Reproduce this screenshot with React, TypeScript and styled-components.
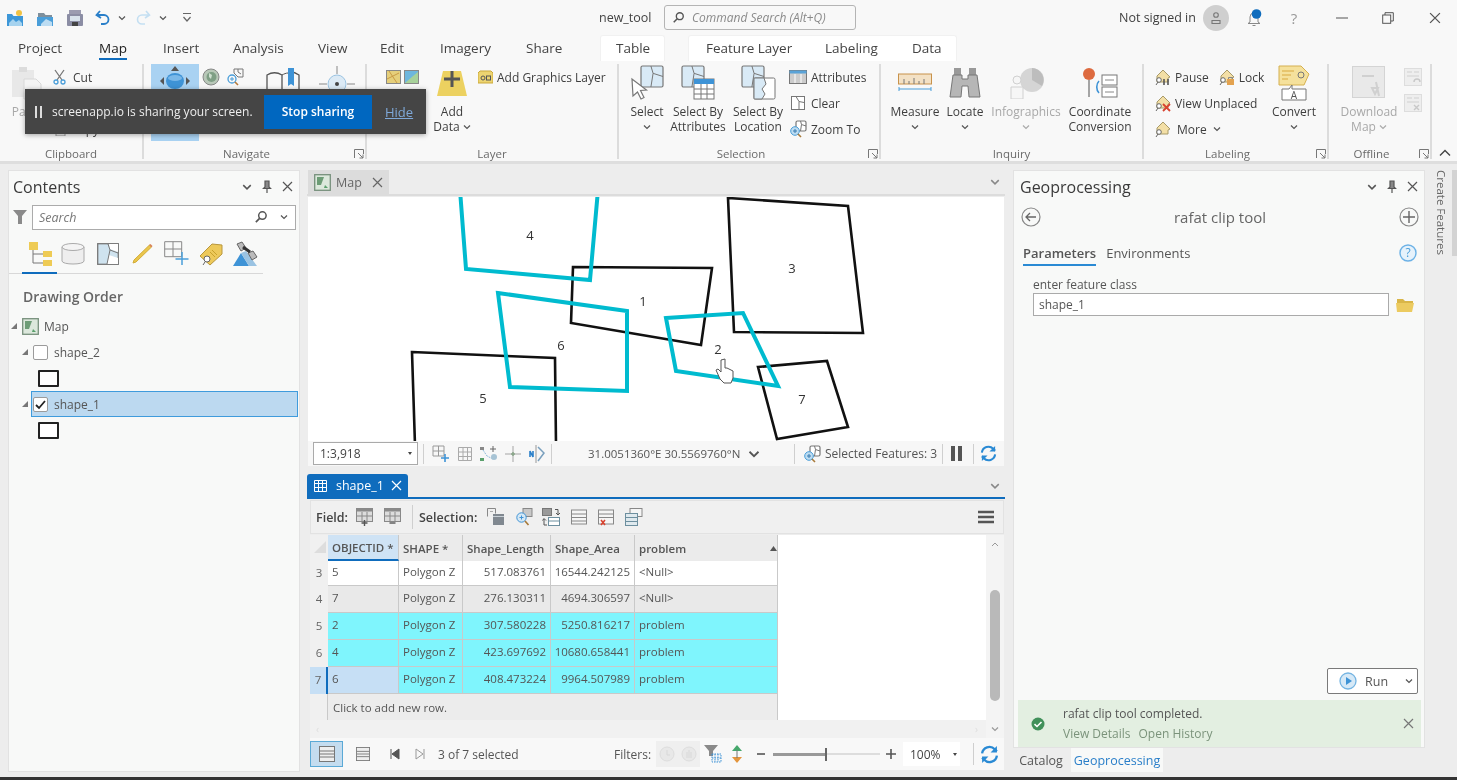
import React from "react";
import styled, { createGlobalStyle } from "styled-components";

const FONT = '"Open Sans", "Noto Sans", "Liberation Sans", sans-serif';

const Global = createGlobalStyle`
  html, body { margin: 0; padding: 0; background: #efefef; }
  body { font-family: ${FONT}; color: #3e3e3e; overflow: hidden; }
  * { box-sizing: border-box; }
`;

const Win = styled.div`
  position: relative; width: 1457px; height: 780px; overflow: hidden;
  display: flex; flex-direction: column; background: #f8f8f8; filter: blur(0.35px);
`;
const TitleBar = styled.div`display: flex; align-items: center; height: 35px; flex: none;`;
const Qat = styled.div`display: flex; align-items: center; width: 599px; flex: none; padding-left: 6px;`;
const Slot = styled.div<{ $w: number; $ml?: number; $left?: boolean }>`
  width: ${p => p.$w}px; margin-left: ${p => p.$ml ?? 0}px; flex: none; display: flex; align-items: center;
  justify-content: ${p => (p.$left ? "flex-start" : "center")}; white-space: nowrap;
`;
const DocName = styled.div`width: 65px; flex: none; font-size: 12.5px; color: #444;`;
const CommandSearch = styled.div`
  width: 192px; height: 25px; flex: none; border: 1.5px solid #b4b4b4; border-radius: 3px; display: flex; align-items: center; gap: 7px;
  padding-left: 7px; font-size: 12px; font-style: italic; color: #8a8a8a;
`;
const AccountArea = styled.div`display: flex; align-items: center; margin-left: auto; width: 338px; flex: none; font-size: 12.5px;`;
const Avatar = styled.div`width: 26px; height: 26px; border-radius: 50%; background: #cfcfcf; display: flex; align-items: center; justify-content: center;`;
const HelpMark = styled.div`width: 30px; flex: none; text-align: center; font-size: 15px; color: #999; line-height: 20px;`;

const TabBar = styled.div`display: flex; align-items: stretch; height: 27px; flex: none; padding-left: 18px; font-size: 13.5px;`;
const Tab = styled.div<{ $w: number; $active?: boolean }>`
  width: ${p => p.$w}px; flex: none; display: flex; align-items: center; position: relative; white-space: nowrap;
  color: ${p => (p.$active ? "#222" : "#444")};
  span { border-bottom: 2px solid ${p => (p.$active ? "#0f6cbd" : "transparent")}; line-height: 20px; margin-left: ${p => (p.$active ? "-1px" : "0")}; }
`;
const ContextPanel = styled.div<{ $w: number; $ml: number; $pl: number }>`
  width: ${p => p.$w}px; margin-left: ${p => p.$ml}px; padding-left: ${p => p.$pl}px; flex: none; background: #fff; border-radius: 3px 3px 0 0;
  display: flex; height: 26px; align-self: flex-start; border: 1px solid #f1f1f1; border-bottom: 0;
`;

const Ribbon = styled.div`display: flex; height: 99px; flex: none; background: #f8f8f8; padding-top: 2px;`;
const RibbonGroup = styled.div<{ $w: number }>`
  width: ${p => p.$w}px; flex: none; display: flex; flex-direction: column; border-right: 2px solid #dcdcdc; height: 95px;
`;
const GroupBody = styled.div<{ $pl: number }>`display: flex; height: 81px; flex: none; padding-left: ${p => p.$pl}px;`;
const GroupFoot = styled.div`display: flex; align-items: center; height: 16px; margin-top: 1px; font-size: 11.5px; color: #6a6a6a;`;
const GroupName = styled.div`flex: 1; text-align: center;`;
const Launcher = styled.div`width: 16px; flex: none; display: flex; justify-content: flex-end; padding-right: 1px;`;
const LargeTool = styled.div<{ $w: number; $ml?: number; $muted?: boolean }>`
  width: ${p => p.$w}px; margin-left: ${p => p.$ml ?? 0}px; flex: none; display: flex; flex-direction: column; align-items: center;
  font-size: 12px; line-height: 15px; color: ${p => (p.$muted ? "#a8a8a8" : "#3e3e3e")}; white-space: nowrap;
`;
const LabelLine = styled.div`display: flex; align-items: center; gap: 3px;`;
const IconBox = styled.div`height: 40px; display: flex; align-items: center; justify-content: center; flex: none; padding-bottom: 2px;`;
const ToolChevron = styled.div`height: 15px; display: flex; align-items: center;`;
const ToolCol = styled.div<{ $w?: number; $ml?: number }>`
  display: flex; flex-direction: column; flex: none; width: ${p => (p.$w ? p.$w + "px" : "auto")}; margin-left: ${p => p.$ml ?? 0}px;
`;
const SmallTool = styled.div<{ $gap?: number }>`
  display: flex; align-items: center; height: 26px; gap: ${p => p.$gap ?? 4}px; font-size: 12px; white-space: nowrap; color: #3e3e3e;
`;
const ActiveTile = styled.div`width: 48px; height: 77px; flex: none; background: #a9d2f2; display: flex; justify-content: center; padding-top: 2px;`;
const Collapse = styled.div`flex: 1; display: flex; align-self: flex-start; justify-content: center; padding-top: 85px;`;

const ShareBanner = styled.div`
  position: absolute; left: 25px; top: 89px; width: 401px; height: 45px; background: #454545; box-shadow: 0 1px 5px rgba(0,0,0,.35);
  display: flex; align-items: center; color: #eee; font-size: 12px;
`;
const PauseMark = styled.div`width: 27px; flex: none; padding-left: 10px; display: flex; gap: 3px; span { width: 2px; height: 12px; background: #ddd; display: block; }`;
const ShareText = styled.div`width: 212px; flex: none; white-space: nowrap;`;
const StopButton = styled.div`width: 108px; height: 34px; flex: none; background: #0067c0; color: #fff; display: flex; align-items: center; justify-content: center; font-weight: 600; font-size: 12px;`;
const HideLink = styled.div`margin-left: 13px; color: #7fa9d9; text-decoration: underline; font-size: 13px;`;

const Main = styled.div`
  flex: 1; display: flex; background: #ededed; border-top: 3px solid #dedede; padding: 6px 0 5px 8px; min-height: 0;
`;
const Panel = styled.div<{ $w: number; $grow?: boolean }>`
  width: ${p => p.$w}px; flex: ${p => (p.$grow ? "1" : "none")}; background: #f8f9f8; border: 1px solid #e2e2e2; display: flex; flex-direction: column; min-height: 0;
`;
const PaneHeader = styled.div<{ $pl?: number }>`display: flex; align-items: center; height: 31px; flex: none; padding: 0 3px 0 ${p => p.$pl ?? 4}px;`;
const PaneTitle = styled.div`flex: 1; font-size: 16px; color: #3a3a3a;`;
const SearchRow = styled.div`display: flex; align-items: center; height: 26px; flex: none; padding: 0 3px 0 2px; margin-top: 2px;`;
const SearchField = styled.div`
  flex: 1; height: 25px; background: #fff; border: 1px solid #ababab; display: flex; align-items: center; font-size: 12.5px; font-style: italic; color: #777; padding-left: 6px; margin-left: 3px;
`;
const ViewIcons = styled.div`display: flex; align-items: center; height: 44px; padding: 4px 0 0 14px; flex: none; width: 254px; border-bottom: 1px solid #d8d8d8;`;
const ViewRule = styled.div`height: 2px; width: 35px; background: #0f6cbd; margin: -2px 0 0 13px; flex: none;`;
const OrderHeading = styled.div`font-size: 14px; font-weight: 600; color: #666; margin: 13px 0 0 14px; height: 26px; flex: none;`;
const TreeRow = styled.div<{ $indent: number }>`
  display: flex; align-items: center; height: 26px; flex: none; font-size: 12px; color: #555; padding-left: ${p => p.$indent}px; gap: 4px;
`;
const TreeText = styled.span<{ $ml: number }>`margin-left: ${p => p.$ml}px;`;
const SelectionBox = styled.div`
  display: flex; align-items: center; gap: 6px; flex: 1; height: 26px; background: #bcd9f0; border: 1px solid #3f9bdc; margin-left: -2px; padding-left: 1px; margin-right: 1px;
`;
const CheckBox = styled.div`width: 15px; height: 15px; background: #fff; border: 1px solid #9b9b9b; border-radius: 2px; display: flex; align-items: center; justify-content: center; flex: none;`;
const Swatch = styled.div<{ $ml: number }>`width: 21px; height: 17px; border: 2px solid #222; background: #fff; margin: 0 0 0 ${p => p.$ml}px; flex: none; border-radius: 1px;`;
const SwatchRow = styled.div`height: 26px; display: flex; align-items: center; flex: none;`;

const Center = styled.div`width: 698px; margin-left: 7px; flex: none; display: flex; flex-direction: column;`;
const DocTabs = styled.div`display: flex; height: 26px; flex: none; align-items: stretch; border-bottom: 2px solid #dcdcdc;`;
const MapTab = styled.div`width: 81px; margin-left: 1px; flex: none; background: #dcdcdc; display: flex; align-items: center; font-size: 12.5px; color: #666; padding-left: 6px; gap: 5px;`;
const RightChevron = styled.div`margin-left: auto; width: 15px; display: flex; align-items: center; justify-content: flex-start;`;
const MapView = styled.div`height: 244px; flex: none; margin: 1px 1px 0 1px; background: #fff; overflow: hidden; display: flex;`;
const MapStatus = styled.div`height: 25px; flex: none; margin: 0 1px; display: flex; align-items: center; font-size: 12px; color: #555; padding-left: 5px; background: #f7f7f7;`;
const ScaleBox = styled.div`width: 105px; height: 23px; background: #fff; border: 1px solid #aaa; display: flex; align-items: center; justify-content: space-between; padding: 0 4px 0 6px; flex: none; color: #444;`;
const VSep = styled.div<{ $ml?: number; $mr?: number; $h?: number }>`width: 1px; height: ${p => p.$h ?? 20}px; background: #cfcfcf; flex: none; margin-left: ${p => p.$ml ?? 0}px; margin-right: ${p => p.$mr ?? 0}px;`;
const CoordText = styled.div`width: 152px; flex: none; font-size: 11.5px; white-space: nowrap;`;
const TableTabs = styled.div`display: flex; height: 25px; margin-top: 8px; flex: none; border-bottom: 2px solid #0f6cbd; align-items: stretch;`;
const TableTab = styled.div`width: 101px; flex: none; background: #0f6cbd; color: #fff; border-radius: 3px 3px 0 0; display: flex; align-items: center; padding-left: 7px; gap: 9px; font-size: 12.5px;`;
const TableBar = styled.div`height: 34px; flex: none; margin: 1px 1px 0 3px; background: #f0f0f0; display: flex; align-items: center; font-size: 12.5px; font-weight: 600; color: #444; padding-left: 5px; border: 1px solid #e2e2e2;`;
const BarLabel = styled.div<{ $w: number }>`width: ${p => p.$w}px; flex: none; white-space: nowrap;`;
const TableArea = styled.div`display: flex; height: 203px; flex: none; margin: 1px 1px 0 3px;`;
const GridSide = styled.div`flex: 1; display: flex; flex-direction: column; min-width: 0;`;
const GridWhite = styled.div`height: 185px; flex: none; background: #fff;`;
const Row = styled.div<{ $h: number }>`display: grid; grid-template-columns: 18px 71px 64px 88px 84px 143px; height: ${p => p.$h}px; width: 468px; font-size: 11.5px; color: #555;`;
const Cell = styled.div<{ $bg?: string; $right?: boolean; $head?: boolean; $mark?: boolean; $weight?: number }>`
  background: ${p => p.$bg ?? "#fff"}; border-right: 1px solid #c9c9c9; border-bottom: ${p => (p.$head ? "0" : "1px solid #c9c9c9")};
  display: flex; align-items: center; justify-content: ${p => (p.$right ? "flex-end" : "flex-start")};
  padding: ${p => (p.$head ? "1px" : "0")} ${p => (p.$right ? "4px" : "0")} ${p => (p.$head ? "0" : "3px")} ${p => (p.$right ? "0" : "4px")};
  white-space: nowrap; font-weight: ${p => p.$weight ?? 400}; overflow: hidden;
  ${p => (p.$mark ? "border-bottom: 2px solid #0f6cbd;" : "")}
`;
const RowHead = styled.div<{ $active?: boolean }>`
  background: ${p => (p.$active ? "#c6dff5" : "#f0f0f0")}; display: flex; align-items: center; justify-content: center; color: #666; padding-bottom: 3px;
  ${p => (p.$active ? "border-right: 2px solid #0f6cbd;" : "")}
`;
const AddRow = styled.div`width: 468px; height: 27px; display: flex; background: #ececec;`;
const AddHead = styled.div`width: 18px; background: #f0f0f0; border-right: 1px solid #c9c9c9; flex: none;`;
const AddText = styled.div`flex: 1; display: flex; align-items: center; padding-left: 5px; font-size: 11.5px; color: #555; border-right: 1px solid #c9c9c9; border-bottom: 1px solid #c9c9c9;`;
const HScroll = styled.div`height: 18px; flex: none; background: #f1f1f1; display: flex; justify-content: space-between; align-items: center; padding: 0 8px 0 6px; color: #ddd; font-size: 10px;`;
const VScroll = styled.div`width: 18px; flex: none; background: #f4f4f4; display: flex; flex-direction: column; align-items: center;`;
const ScrollEnd = styled.div`height: 18px; display: flex; align-items: center; justify-content: center; flex: none;`;
const ScrollThumb = styled.div`width: 10px; height: 111px; background: #b9b9b9; border-radius: 5px; margin-top: 37px; flex: none;`;
const TableStatus = styled.div`height: 32px; flex: none; margin: 0 1px 0 3px; background: #f8f8f8; display: flex; align-items: center; font-size: 12px; color: #555;`;
const LayoutActive = styled.div`width: 33px; height: 26px; flex: none; background: #c4dcef; border: 1px solid #5aa9d6; display: flex; align-items: center; justify-content: center;`;
const FilterChips = styled.div`width: 44px; height: 26px; flex: none; background: #efefef; display: flex; align-items: center; justify-content: space-around;`;
const SliderTrack = styled.div`width: 107px; height: 14px; flex: none; display: flex; align-items: center;`;
const SliderFill = styled.div`height: 3px; background: #999; flex: none;`;
const SliderThumb = styled.div`width: 2px; height: 13px; background: #666; flex: none;`;
const SliderRest = styled.div`height: 2px; background: #ddd; flex: 1;`;
const ZoomBox = styled.div`width: 57px; height: 24px; margin-left: 1px; background: #fff; display: flex; align-items: center; justify-content: space-between; padding: 0 2px 0 7px; flex: none; color: #444;`;

const ToolLabel = styled.div`text-align: center; font-size: 15px; color: #666; flex: 1;`;
const ToolHeader = styled.div`display: flex; align-items: center; height: 27px; padding: 0 5px 0 7px; margin-top: 1px; flex: none;`;
const GpTabs = styled.div`display: flex; align-items: flex-start; height: 30px; padding: 9px 5px 0 9px; margin-top: 5px; font-size: 13px; flex: none; color: #555;`;
const GpTab = styled.div<{ $active?: boolean }>`height: 22px; margin-right: 10px; white-space: nowrap; border-bottom: 2px solid ${p => (p.$active ? "#2a8ad4" : "transparent")}; line-height: 18px; font-weight: ${p => (p.$active ? 600 : 400)};`;
const FieldLabel = styled.div`margin: 13px 0 0 19px; font-size: 12px; color: #555; height: 14px; line-height: 14px; flex: none;`;
const FieldRow = styled.div`display: flex; align-items: center; height: 23px; margin: 1px 0 0 19px; flex: none;`;
const FieldInput = styled.div`width: 356px; height: 23px; background: #fff; border: 1px solid #aaa; font-size: 12px; display: flex; align-items: center; padding-left: 5px; color: #555; flex: none;`;
const Grow = styled.div`flex: 1;`;
const RunRow = styled.div`display: flex; justify-content: flex-end; padding-right: 6px; height: 32px; flex: none;`;
const RunButton = styled.div`width: 91px; height: 26px; background: #fff; border: 1.5px solid #7a7a7a; border-radius: 2px; display: flex; align-items: center; padding: 0 4px 0 11px; font-size: 12.5px; color: #555; flex: none; gap: 8px;`;
const Toast = styled.div`height: 47px; flex: none; background: #e3efe1; margin: 0 3px 0 4px; display: flex; align-items: center; padding: 0 7px 0 13px; gap: 18px;`;
const ToastText = styled.div`flex: 1; font-size: 12px; display: flex; flex-direction: column; gap: 3px; line-height: 17px; color: #555;`;
const ToastLinks = styled.div`display: flex; gap: 8px; color: #7b937b;`;
const RightColumn = styled.div`width: 412px; margin-left: 8px; flex: none; display: flex; flex-direction: column; min-height: 0;`;
const BottomTabs = styled.div`display: flex; height: 24px; flex: none; font-size: 12.5px; align-items: stretch;`;
const BottomTab = styled.div<{ $active?: boolean; $w: number; $ml: number }>`
  width: ${p => p.$w}px; margin-left: ${p => p.$ml}px; display: flex; align-items: center; justify-content: center; flex: none;
  background: ${p => (p.$active ? "#f8f9f8" : "transparent")}; color: ${p => (p.$active ? "#2a7fc9" : "#555")};
`;
const Rail = styled.div`flex: 1; display: flex; justify-content: space-between; margin-left: 5px; height: 86px;`;
const RailLabel = styled.div`writing-mode: vertical-rl; font-size: 11.5px; color: #666; white-space: nowrap; padding-left: 4px;`;
const RailThumb = styled.div`width: 5px; background: #d3d3d3; height: 86px;`;
const DarkEdge = styled.div`height: 3px; background: #333; flex: none;`;

type SvgP = { w: number; h?: number; children?: React.ReactNode; vb?: string };
const Ic = ({ w, h, children, vb }: SvgP) => (
  <svg width={w} height={h ?? w} viewBox={vb ?? `0 0 ${w} ${h ?? w}`} fill="none" style={{ display: "block", flex: "none" }}>{children}</svg>
);

const Chev = ({ c = "#555", s = 8 }: { c?: string; s?: number }) => (
  <Ic w={s} h={s} vb="0 0 8 8"><path d="M1 2.5L4 5.5L7 2.5" stroke={c} strokeWidth="1.2" /></Ic>
);
const Cross = ({ c = "#555", s = 11 }: { c?: string; s?: number }) => (
  <Ic w={s} h={s} vb="0 0 11 11"><path d="M1 1L10 10M10 1L1 10" stroke={c} strokeWidth="1.2" /></Ic>
);
const Pin = () => (
  <Ic w={10} h={13}><path d="M3 1h4v6l1.5 1.5h-7L3 7zM5 8.5V13" stroke="#555" strokeWidth="1.2" fill="#888" /></Ic>
);
const Launch = () => (
  <Ic w={10} h={10}><path d="M.5 9V.5H9.5V5M4 4l5 5M9 5.5V9H5.5" stroke="#777" strokeWidth="1" /></Ic>
);
const Lens = ({ s = 15 }: { s?: number }) => (
  <Ic w={s} h={s} vb="0 0 15 15"><circle cx="9" cy="6" r="4" stroke="#555" strokeWidth="1.6" /><path d="M6 9L2 13" stroke="#555" strokeWidth="1.8" /></Ic>
);
const DownTri = () => <Ic w={6} h={5}><path d="M1 1h4L3 4z" fill="#444" /></Ic>;
const TreeTri = () => <Ic w={8} h={8}><path d="M7 1v6H1z" fill="#777" /></Ic>;

const QatNew = () => (
  <Ic w={18}><path d="M1 5h5l1.5 2H17v10H1z" fill="#3d97d8" /><path d="M3 14l4-4 3 3 3-2 3 3v3H3z" fill="#a6d3ef" /><circle cx="13" cy="4" r="3" fill="#f0c243" /></Ic>
);
const QatOpen = () => (
  <Ic w={18}><path d="M2 4h6l1.5 2H16v3H2z" fill="#7e8f9c" /><path d="M1 8h16v9H1z" fill="#4a9ed9" /><path d="M5 15l5-5 6 3v4H5z" fill="#bcdcf2" /></Ic>
);
const QatSave = () => (
  <Ic w={18}><rect x="3" y="1" width="12" height="5" fill="#9b9bb0" /><rect x="1" y="5" width="16" height="12" rx="1" fill="#8b8da4" /><rect x="4" y="7" width="10" height="5" fill="#d8e2ec" /><rect x="6" y="13" width="6" height="4" fill="#444" /></Ic>
);
const Undo = ({ c }: { c: string }) => (
  <Ic w={16}><path d="M5 1L1.5 5L6 8M2.5 5H9a4.5 4.5 0 010 9H6" stroke={c} strokeWidth="1.8" /></Ic>
);
const Redo = ({ c }: { c: string }) => (
  <Ic w={16}><path d="M11 1l3.5 4L10 8M13.5 5H7a4.5 4.5 0 000 9h3" stroke={c} strokeWidth="1.6" /></Ic>
);
const Customize = () => (
  <Ic w={10} h={11}><path d="M1 1.5h8M1.5 5l3.5 4 3.5-4" stroke="#666" strokeWidth="1.2" /></Ic>
);
const Bell = () => (
  <Ic w={16} h={18}><path d="M4 13V8a4 4 0 018 0v5l2 1.5H2zM6.5 16.5h3" stroke="#888" strokeWidth="1" /><circle cx="10.5" cy="5" r="4.8" fill="#0f6cbd" /></Ic>
);
const Person = () => (
  <Ic w={12} h={14}><circle cx="6" cy="4" r="2.3" stroke="#777" strokeWidth="1.1" /><path d="M2 12.5V9.5h8v3z" stroke="#777" strokeWidth="1.1" /></Ic>
);
const Restore = () => (
  <Ic w={12}><rect x=".7" y="3" width="8" height="8.3" stroke="#555" /><path d="M3 3V.7h8.3V9H9" stroke="#555" /></Ic>
);

const PasteIc = () => (
  <Ic w={32} h={34}><rect x="1" y="4" width="22" height="27" fill="#e8e8e8" /><rect x="8" y="1" width="8" height="5" fill="#dcdcdc" /><path d="M13 13h12l5 5v15H13z" fill="#f4f4f4" stroke="#d8d8d8" /></Ic>
);
const Scissors = () => (
  <Ic w={16}><path d="M3 1l7 10M12 1L5 11" stroke="#777" strokeWidth="1.3" /><circle cx="4" cy="13" r="2" stroke="#4a9ed9" strokeWidth="1.3" /><circle cx="11" cy="13" r="2" stroke="#4a9ed9" strokeWidth="1.3" /></Ic>
);
const CopyIc = () => <Ic w={14}><rect x="1" y="1" width="9" height="10" stroke="#999" /><rect x="4" y="4" width="9" height="10" fill="#eee" stroke="#999" /></Ic>;
const Explore = () => (
  <Ic w={36} h={30}><path d="M18 0l-4 5h8zM18 30l-4-5h8zM3 15l4-4v8zM33 15l-4-4v8z" fill="#555" /><ellipse cx="18" cy="15" rx="9" ry="8" fill="#3e93d6" /><ellipse cx="18" cy="12" rx="7" ry="3" fill="#7ab8e8" /></Ic>
);
const Globe = () => (
  <Ic w={18}><circle cx="9" cy="9" r="8" fill="#b8c8b8" stroke="#888" /><circle cx="9.5" cy="9" r="5" fill="#7f9f85" /><path d="M7 5l3 2-1 4-2-2z" fill="#cfe0d0" /></Ic>
);
const ZoomFull = () => (
  <Ic w={18}><circle cx="6" cy="11" r="4" stroke="#4a9ed9" strokeWidth="1.3" /><path d="M4 11h4M6 9v4" stroke="#4a9ed9" /><path d="M9 14l3 3" stroke="#b87a3a" strokeWidth="1.6" /><path d="M8 1h9v8h-5L8 5z" stroke="#777" /><path d="M12 1v3l3 2" stroke="#777" /></Ic>
);
const Book = () => (
  <Ic w={34} h={30}><path d="M1 30V7c5-3 10-3 15 0v23M33 30V7c-3-2-6-3-8-3" stroke="#555" strokeWidth="1.3" /><path d="M22 0h6v18l-3-2-3 2z" fill="#3e93d6" /><path d="M16 7c2-1 4-2 6-2" stroke="#555" /></Ic>
);
const Crosshair = () => (
  <Ic w={36} h={34}><path d="M18 0v8M0 18h8M28 18h8" stroke="#888" /><circle cx="18" cy="18" r="9" fill="#dceaf5" stroke="#9ac3e2" /><circle cx="18" cy="18" r="2" fill="#444" /></Ic>
);
const MapThumb = ({ v }: { v: number }) => (
  <Ic w={15} h={14}><rect x=".5" y=".5" width="14" height="13" fill={v ? "#6db6dd" : "#e5cf7b"} stroke="#888" /><path d={v ? "M1 13l8-7 5-4v11z" : "M3 1l8 12M1 9l12-6"} fill={v ? "#a7d19a" : "none"} stroke={v ? "none" : "#c99a44"} /></Ic>
);
const AddData = () => (
  <Ic w={32} h={30}><path d="M7 3h18l6 25H1z" fill="#ecd160" /><path d="M16 3v16M8 11h16" stroke="#555" strokeWidth="3" /></Ic>
);
const GraphicsIc = () => (
  <Ic w={15} h={14}><path d="M2 1h11l2 2v10H0V3z" fill="#edd471" stroke="#cba93a" /><circle cx="5" cy="8" r="2" stroke="#555" /><rect x="8.5" y="6" width="4" height="4" stroke="#555" /></Ic>
);
const MapSheet = ({ x, y, w, h, fill = "#fff" }: { x: number; y: number; w: number; h: number; fill?: string }) => (
  <g><rect x={x} y={y} width={w} height={h} rx="1.5" fill={fill} stroke="#777" strokeWidth="1.2" /><path d={`M${x + w * .45} ${y}l${w * .1} ${h * .35}l${w * .45} ${h * .15}M${x + w * .55} ${y + h * .35}l-${w * .1} ${h * .65}`} stroke="#777" strokeWidth="1" /></g>
);
const SelectIc = () => (
  <Ic w={34} h={36}><MapSheet x={11} y={1} w={22} h={21} fill="#d9eaf6" /><path d="M2 14l1 17 4.5-4 3.5 7 3-1.5-3.5-7 6-.5z" fill="#fff" stroke="#777" strokeWidth="1.2" /></Ic>
);
const SelectAttr = () => (
  <Ic w={36} h={36}><MapSheet x={2} y={1} w={22} h={21} fill="#d9eaf6" /><rect x="14" y="14" width="20" height="20" fill="#fff" stroke="#777" /><rect x="14" y="14" width="20" height="5" fill="#3e93d6" /><path d="M14 24h20M14 29h20M21 19v15M27 19v15" stroke="#777" /></Ic>
);
const SelectLoc = () => (
  <Ic w={36} h={36}><MapSheet x={2} y={1} w={22} h={21} fill="#d9eaf6" /><rect x="14" y="13" width="21" height="21" rx="1.5" fill="#fff" stroke="#777" /><path d="M14 13h10l2 6-4 5 3 5-3 5h-8z" fill="#d9eaf6" stroke="#777" /></Ic>
);
const AttrIc = () => (
  <Ic w={18} h={14}><rect x=".5" y=".5" width="17" height="13" fill="#ccc" stroke="#777" /><rect x=".5" y=".5" width="17" height="3" fill="#5aa3d8" /><path d="M6 4v9M12 4v9" stroke="#fff" /></Ic>
);
const ClearIc = () => (
  <Ic w={14}><rect x=".5" y=".5" width="13" height="13" fill="#fff" stroke="#777" /><path d="M5 .5l3 5 5 1M8 5.5V13" stroke="#777" /></Ic>
);
const ZoomToIc = () => (
  <Ic w={18}><MapSheet x={7} y={1} w={10} h={10} /><circle cx="6" cy="11" r="4.3" fill="#bcdcf2" stroke="#4a9ed9" /><path d="M4 11h4M6 9v4" stroke="#3a7db0" /><path d="M9 14l3 3" stroke="#a87a3a" strokeWidth="1.6" /></Ic>
);
const Measure = () => (
  <Ic w={34} h={20}><rect x=".5" y="1" width="33" height="10" fill="#f3e1c5" stroke="#c8924a" /><path d="M6 11V6M11 11V8M16 11V5M21 11V8M26 11V6" stroke="#777" /><path d="M1 16h32" stroke="#4a9ed9" /><path d="M1 14v4M33 14v4" stroke="#4a9ed9" /></Ic>
);
const Binoc = () => (
  <Ic w={32} h={32}><rect x="5" y="1" width="7" height="7" fill="#999" /><rect x="20" y="1" width="7" height="7" fill="#999" /><path d="M4 8h9v4h6V8h9l3 22H20l-1-11h-6l-1 11H1z" fill="#b6b6b6" stroke="#777" /></Ic>
);
const Infographic = () => (
  <Ic w={36} h={32}><circle cx="24" cy="13" r="12" fill="#d5d5d5" /><path d="M24 13V1a12 12 0 0110 18z" fill="#bdbdbd" /><circle cx="9" cy="13" r="4" fill="#f6f6f6" stroke="#d0d0d0" /><path d="M3 32V20h12v12z" fill="#f6f6f6" stroke="#d0d0d0" /></Ic>
);
const Coord = () => (
  <Ic w={36} h={32}><circle cx="7" cy="7" r="6" fill="#dd6a3f" /><path d="M7 13v17" stroke="#888" strokeWidth="1.5" /><rect x="20" y="8" width="15" height="10" fill="#fff" stroke="#777" /><rect x="20" y="20" width="15" height="10" fill="#fff" stroke="#777" /><path d="M23 13h9M23 25h9" stroke="#888" /><path d="M17 14c-3 3-3 9 0 12" stroke="#3e93d6" strokeWidth="1.6" /></Ic>
);
const Tag = ({ mark }: { mark?: "pause" | "lock" | "x" }) => (
  <Ic w={17}><path d="M9 1l7 7-2 1v4H3V7z" fill="#f3dfa6" stroke="#a89a68" /><circle cx="5" cy="11" r="2.3" fill="#fff" stroke="#666" /><path d="M2 16l2-3" stroke="#666" />
    {mark === "pause" && <path d="M10 10v6M14 10v6" stroke="#555" strokeWidth="1.6" />}
    {mark === "lock" && <g><rect x="9" y="10" width="7" height="6" fill="#e3a24f" /><path d="M10.5 10V8.5h4V10" stroke="#888" /></g>}
    {mark === "x" && <path d="M9 9l7 7M16 9l-7 7" stroke="#d8432f" strokeWidth="1.8" />}
  </Ic>
);
const Convert = () => (
  <Ic w={34} h={36}><path d="M2 1h22l8 8-5 11H2z" fill="#f5e19c" stroke="#d5b050" /><path d="M5 6h12M5 10h9M5 14h6" stroke="#d9a93e" /><circle cx="24" cy="10" r="3" stroke="#777" /><path d="M5 24h7l3-4v4h14v11H5z" fill="#fff" stroke="#777" /><text x="17" y="33.5" fontSize="10" fill="#555" textAnchor="middle" fontFamily={FONT}>A</text></Ic>
);
const DownloadMap = () => (
  <Ic w={34} h={34}><rect x=".5" y=".5" width="32" height="31" fill="#e9e9e9" stroke="#d4d4d4" /><path d="M10 10h12M24 16l3 14M20 22h6l-3 6z" stroke="#d0d0d0" strokeWidth="2" /></Ic>
);
const OfflineSm = ({ x }: { x?: boolean }) => (
  <Ic w={18}><rect x=".5" y=".5" width="17" height="17" fill="#eee" stroke="#ddd" /><path d="M3 4h5M10 4h5M3 8h12" stroke="#d0d0d0" /><path d={x ? "M10 11l5 5M15 11l-5 5" : "M10 14a3 3 0 016 0"} stroke="#c8c8c8" strokeWidth="1.4" /></Ic>
);

const FilterIc = () => <Ic w={16}><path d="M1 1h14L10 7v8H6V7z" fill="#8a8a8a" /></Ic>;
const TreeIc = () => (
  <Ic w={24} h={26}><rect x="1" y="1" width="9" height="8" fill="#eecb55" /><rect x="15" y="10" width="9" height="6" fill="#eecb55" /><rect x="15" y="19" width="9" height="6" fill="#eecb55" /><path d="M5 9v13h10M5 13h10" stroke="#777" /></Ic>
);
const DbIc = () => (
  <Ic w={24} h={22}><path d="M1 4v14c0 4 22 4 22 0V4" fill="#eee" stroke="#aaa" /><ellipse cx="12" cy="4" rx="11" ry="3.5" fill="#f4f4f4" stroke="#aaa" /></Ic>
);
const SheetIc = () => (
  <Ic w={22} h={22}><rect x=".7" y=".7" width="20.6" height="20.6" fill="#cfe3ef" stroke="#777" strokeWidth="1.3" /><path d="M12 1l1 5 8 3V1z M10 21l2-9 9 3v6z" fill="#fff" /><path d="M11 1l2 6 8 3M13 7l-3 14" stroke="#777" /></Ic>
);
const Pencil = () => (
  <Ic w={23} h={23}><path d="M18.5 3l2 2L5 20l-3 1 1-3z" fill="#eac64c" stroke="#d3ad39" /><path d="M18 3l1.5-1 2 2-1 1.5z" fill="#d7845a" /></Ic>
);
const GridPlus = () => (
  <Ic w={25} h={26}><path d="M.7.7h17v15H.7zM9 .7v15M.7 8h17" stroke="#888" /><path d="M18 11v13M11.5 18h13" stroke="#4a9ed9" strokeWidth="1.5" /></Ic>
);
const BigTag = () => (
  <Ic w={24}><path d="M1 14L13 2l10 1v9L11 23z" fill="#edc95a" stroke="#b8973e" /><circle cx="8" cy="17" r="3" fill="#fff" stroke="#666" /><path d="M4 23l2-3" stroke="#666" /><path d="M13 8l5 5M11 10l5 5" stroke="#c9a22c" /></Ic>
);
const Satellite = () => (
  <Ic w={26} h={26}><path d="M1 25l8-13 8 13z" fill="#3e93d6" /><path d="M9 12l8 13h8L14 10z" fill="#9ac3e2" /><path d="M5 3l5-2 4 6-5 3zM16 12l5-2 4 6-5 3z" fill="#bbb" stroke="#666" /><path d="M11 6l7 5" stroke="#333" strokeWidth="3" /></Ic>
);
const MiniMap = () => (
  <Ic w={17}><rect x=".7" y=".7" width="15.6" height="15.6" fill="#dce8dc" stroke="#77907c" strokeWidth="1.3" /><path d="M3 3h7l-3 8H3z" fill="#6d9c76" /><path d="M11 11l3 3h-4z" fill="#5aa06c" /></Ic>
);
const Tick = () => <Ic w={11}><path d="M1 6l3 3 6-7" stroke="#222" strokeWidth="1.8" /></Ic>;

const GridAdd = () => <Ic w={18}><path d="M1 1h11v10H1zM6.5 1v10M1 6h11" stroke="#999" /><path d="M13 9v8M9 13h8" stroke="#3e93d6" strokeWidth="1.6" /></Ic>;
const GridPlain = () => <Ic w={14}><path d="M.5.5h13v13H.5zM5 .5v13M9.5.5v13M.5 5h13M.5 9.5h13" stroke="#aaa" /></Ic>;
const SnapIc = () => <Ic w={20} h={18}><path d="M4 5l4 6 6 3" stroke="#8dbadb" strokeDasharray="2 1" /><rect x="1" y="2" width="4" height="3" fill="#888" /><rect x="1" y="13" width="4" height="3" fill="#5aa06c" /><path d="M14 1v6M11 4h6" stroke="#666" /><circle cx="15" cy="12" r="3" fill="#a7c3d4" /></Ic>;
const CrossSm = () => <Ic w={18}><path d="M9 1v16M1 9h16" stroke="#a5a5a5" /><path d="M7 9h4M9 7v4" stroke="#8aa68a" strokeWidth="1.5" /></Ic>;
const NArrow = () => <Ic w={18}><path d="M2 12V6l3 6V6" stroke="#2a7fc9" strokeWidth="1.6" /><path d="M8 0v18" stroke="#999" /><path d="M10 2l6 6-6 8" stroke="#7aa0be" strokeWidth="1.5" /></Ic>;
const Refresh = ({ s = 17 }: { s?: number }) => (
  <Ic w={s} h={s} vb="0 0 18 18"><path d="M2 8a7 7 0 0112-4l2 2M16 10a7 7 0 01-12 4l-2-2" stroke="#2a8ad4" strokeWidth="2.2" /><path d="M16 1v6h-6M2 17v-6h6" fill="#2a8ad4" /></Ic>
);
const PauseBars = () => <Ic w={11} h={15}><path d="M0 0h4v15H0zM7 0h4v15H7z" fill="#555" /></Ic>;
const TableMini = ({ c = "#fff" }: { c?: string }) => <Ic w={13} h={12}><path d="M.5.5h12v11H.5z" stroke={c} /><path d="M.5 3.5h12M4.5.5v11M8.5.5v11M.5 7.5h12" stroke={c} /></Ic>;
const FieldAdd = ({ minus }: { minus?: boolean }) => (
  <Ic w={17} h={18}><rect x=".5" y=".5" width="16" height="13" fill="#dcdcdc" stroke="#888" /><rect x=".5" y=".5" width="16" height="3" fill="#8a8a8a" /><path d="M6 4v9M11 4v9M1 8h15" stroke="#888" /><path d={minus ? "M5.5 15h6" : "M5.5 15h6M8.5 12v6"} stroke="#555" strokeWidth="1.4" /></Ic>
);
const SelA = () => <Ic w={18}><path d="M.5 8.5V.5h8v5" stroke="#888" /><path d="M3 3.5h3" stroke="#aaa" /><rect x="6" y="6" width="11" height="11" fill="#808890" /><path d="M6 8.5h11" stroke="#c8d0d6" /></Ic>;
const SelB = () => <Ic w={18}><rect x="8" y=".5" width="9" height="8" fill="#c8c8c8" stroke="#888" /><circle cx="6.5" cy="9.5" r="4.7" fill="#d5e8f5" stroke="#3e93d6" /><path d="M4.5 9.5h4M6.5 7.5v4" stroke="#3e93d6" /><path d="M10 13l3.5 4" stroke="#a87a3a" strokeWidth="1.6" /></Ic>;
const SelC = () => <Ic w={18}><rect x=".5" y=".5" width="9" height="7" fill="#9a9a9a" stroke="#777" /><rect x="6.5" y="9.5" width="11" height="8" fill="#fff" stroke="#6d8f9f" /><path d="M7 13h10" stroke="#6d8f9f" /><path d="M13 1.5h3v5M14 5l2 2 2-2M5 17H2v-6M.5 12.5l1.500-2 2 2" stroke="#555" /></Ic>;
const SelD = () => <Ic w={16}><rect x=".5" y="1" width="15" height="14" fill="#f5f5f5" stroke="#888" /><path d="M1 5h14M1 8.5h14M1 12h14" stroke="#888" /></Ic>;
const SelE = () => <Ic w={17}><rect x=".5" y="1" width="15" height="14" fill="#f5f5f5" stroke="#888" /><path d="M1 5h14M1 8.5h14" stroke="#888" /><path d="M3 11l4 5M7 11l-4 5" stroke="#d8432f" strokeWidth="1.6" /></Ic>;
const SelF = () => <Ic w={18}><rect x="5" y=".5" width="12" height="8" fill="#f5f5f5" stroke="#888" /><rect x=".5" y="5.500" width="12" height="12" fill="#dfe9ee" stroke="#6d8f9f" /><path d="M1 9.500h11M1 13.500h11" stroke="#6d8f9f" /></Ic>;
const Hamburger = () => <Ic w={16} h={14}><path d="M0 2h16M0 7h16M0 12h16" stroke="#555" strokeWidth="2.4" /></Ic>;

const ListLines = ({ s = 16 }: { s?: number }) => <Ic w={s} h={s} vb="0 0 16 16"><rect x=".5" y=".5" width="15" height="15" fill="#eee" stroke="#777" /><path d="M1 5h14M1 8h14M1 11h14" stroke="#777" /></Ic>;
const Skip = ({ flip, c }: { flip?: boolean; c: string }) => (
  <Ic w={11} h={12}><path d={flip ? "M2 1l7 5-7 5zM10 1v10" : "M9 1L2 6l7 5zM1 1v10"} stroke={c} fill={flip ? "none" : c} /></Ic>
);
const Chip = ({ t }: { t: string }) => <Ic w={16}><circle cx="8" cy="8" r="7" fill="#e8e8e8" stroke="#ddd" /><path d={t} stroke="#d8d8d8" /></Ic>;
const FilterTable = () => <Ic w={20}><path d="M1 1h14l-5 6v5H6V7z" fill="#8a8a8a" /><path d="M9 10h9v8H9zM12 10v8M15 10v8M9 14h9" stroke="#3e93d6" strokeDasharray="1.5 1" /></Ic>;
const UpDown = () => <Ic w={14} h={20}><path d="M7 19l-5-6h10z" fill="#e3953c" /><path d="M2 7l5-6 5 6z" fill="#46a86c" /><path d="M7 6v8" stroke="#777" /></Ic>;

const ArrowBack = () => (
  <Ic w={20}><circle cx="10" cy="10" r="9" stroke="#888" strokeWidth="1.2" /><path d="M15 10H5M9 6l-4 4 4 4" stroke="#666" strokeWidth="1.3" /></Ic>
);
const PlusCircle = () => (
  <Ic w={20}><circle cx="10" cy="10" r="9" stroke="#888" strokeWidth="1.2" /><path d="M10 4v12M4 10h12" stroke="#666" strokeWidth="1.4" /></Ic>
);
const HelpCircle = () => (
  <Ic w={18}><circle cx="9" cy="9" r="8" stroke="#6cb2e6" strokeWidth="1.4" fill="#e6f2fb" /><text x="9" y="13" fontSize="12" fill="#4a9ed9" textAnchor="middle" fontFamily={FONT}>?</text></Ic>
);
const Folder = () => (
  <Ic w={18} h={14}><path d="M1 3V1h6l2 2h8v3H1z" fill="#d9b648" /><path d="M0 5h18l-2 9H1z" fill="#eccb60" /></Ic>
);
const PlayRound = () => (
  <Ic w={18}><circle cx="9" cy="9" r="8" fill="#d6e9f7" stroke="#74b4e2" strokeWidth="1.3" /><path d="M7 5l6 4-6 4z" fill="#3e93d6" /></Ic>
);
const OkBadge = () => (
  <Ic w={14}><circle cx="7" cy="7" r="6.5" fill="#41915a" /><path d="M3.5 7.2l2.5 2.3L10.5 5" stroke="#fff" strokeWidth="1.6" /></Ic>
);

const Polygons = () => {
  const black = [
    "573,267 712,268 701,345 571,323",
    "728,198 848,206 863,333 734,332",
    "412,352 555,358 556,445 415,445",
    "758,367 827,361 848,427 777,439",
  ];
  const cyan = [
    "460,190 466,269 590,280 598,190",
    "498,293 627,311 627,391 510,387",
    "666,318 743,313 778,386 676,371",
  ];
  const labels: [string, number, number][] = [["4", 530, 240], ["1", 643, 306], ["3", 792, 273], ["6", 561, 350], ["2", 718, 354], ["5", 483, 403], ["7", 802, 404]];
  return (
    <svg width="696" height="244" viewBox="308 197 696 244" style={{ display: "block" }}>
      {black.map(p => <polygon key={p} points={p} fill="none" stroke="#111" strokeWidth="2.6" />)}
      {cyan.map(p => <polygon key={p} points={p} fill="none" stroke="#00bbcf" strokeWidth="4" />)}
      {labels.map(([t, x, y]) => <text key={t} x={x} y={y} fontSize="13" fill="#333" textAnchor="middle" fontFamily={FONT}>{t}</text>)}
      <path d="M721 360v12l-3-3-2 1 4 9 4 4h7l2-5v-7l-2-1-2-1-2-1-2 0v-9z" fill="#fff" stroke="#555" strokeWidth="1" />
    </svg>
  );
};

type RowData = [string, string, string, string, string, string];
const rows: RowData[] = [
  ["3", "5", "Polygon Z", "517.083761", "16544.242125", "<Null>"],
  ["4", "7", "Polygon Z", "276.130311", "4694.306597", "<Null>"],
  ["5", "2", "Polygon Z", "307.580228", "5250.816217", "problem"],
  ["6", "4", "Polygon Z", "423.697692", "10680.658441", "problem"],
  ["7", "6", "Polygon Z", "408.473224", "9964.507989", "problem"],
];

export default function App() {
  return (
    <Win>
      <Global />
      <TitleBar>
        <Qat>
          <Slot $w={18}><QatNew /></Slot>
          <Slot $w={18} $ml={12}><QatOpen /></Slot>
          <Slot $w={18} $ml={12}><QatSave /></Slot>
          <Slot $w={16} $ml={11}><Undo c="#2a7fc9" /></Slot>
          <Slot $w={12} $ml={5}><Chev /></Slot>
          <Slot $w={16} $ml={7}><Redo c="#c4dff2" /></Slot>
          <Slot $w={12} $ml={6}><Chev /></Slot>
          <Slot $w={12} $ml={12}><Customize /></Slot>
        </Qat>
        <DocName>new_tool</DocName>
        <CommandSearch><Lens s={13} />Command Search (Alt+Q)</CommandSearch>
        <AccountArea>
          <Slot $w={84} $left>Not signed in</Slot>
          <Avatar><Person /></Avatar>
          <Slot $w={50}><Bell /></Slot>
          <HelpMark>?</HelpMark>
          <Slot $w={24} $ml={21}><Ic w={12} h={2}><path d="M0 1h12" stroke="#555" /></Ic></Slot>
          <Slot $w={24} $ml={22}><Restore /></Slot>
          <Slot $w={24} $ml={23}><Cross s={12} /></Slot>
        </AccountArea>
      </TitleBar>
      <TabBar>
        <Tab $w={82}><span>Project</span></Tab>
        <Tab $w={63} $active><span>Map</span></Tab>
        <Tab $w={70}><span>Insert</span></Tab>
        <Tab $w={85}><span>Analysis</span></Tab>
        <Tab $w={62}><span>View</span></Tab>
        <Tab $w={60}><span>Edit</span></Tab>
        <Tab $w={86}><span>Imagery</span></Tab>
        <Tab $w={74}><span>Share</span></Tab>
        <ContextPanel $w={65} $ml={0} $pl={15}><Tab $w={48}><span>Table</span></Tab></ContextPanel>
        <ContextPanel $w={269} $ml={23} $pl={17}>
          <Tab $w={119}><span>Feature Layer</span></Tab>
          <Tab $w={87}><span>Labeling</span></Tab>
          <Tab $w={40}><span>Data</span></Tab>
        </ContextPanel>
      </TabBar>
      <Ribbon>
        <RibbonGroup $w={144}>
          <GroupBody $pl={8}>
            <LargeTool $w={38} $muted><IconBox><PasteIc /></IconBox>Paste</LargeTool>
            <ToolCol $ml={6}>
              <SmallTool $gap={5}><Scissors />Cut</SmallTool>
              <SmallTool $gap={5}><span /></SmallTool>
              <SmallTool $gap={5}><CopyIc />Copy</SmallTool>
            </ToolCol>
          </GroupBody>
          <GroupFoot><GroupName>Clipboard</GroupName></GroupFoot>
        </RibbonGroup>
        <RibbonGroup $w={223}>
          <GroupBody $pl={7}>
            <ActiveTile><Explore /></ActiveTile>
            <ToolCol $w={18} $ml={3}><SmallTool><Globe /></SmallTool></ToolCol>
            <ToolCol $w={18} $ml={6}><SmallTool><ZoomFull /></SmallTool></ToolCol>
            <ToolCol $w={34} $ml={22}><IconBox><Book /></IconBox></ToolCol>
            <ToolCol $w={36} $ml={19}><IconBox><Crosshair /></IconBox></ToolCol>
          </GroupBody>
          <GroupFoot><GroupName>Navigate</GroupName><Launcher><Launch /></Launcher></GroupFoot>
        </RibbonGroup>
        <RibbonGroup $w={252}>
          <GroupBody $pl={19}>
            <ToolCol $w={34}>
              <SmallTool $gap={3}><MapThumb v={0} /><MapThumb v={1} /></SmallTool>
              <SmallTool $gap={3}><MapThumb v={0} /><MapThumb v={1} /></SmallTool>
            </ToolCol>
            <LargeTool $w={50} $ml={7}><IconBox><AddData /></IconBox>Add<LabelLine>Data <Chev /></LabelLine></LargeTool>
            <ToolCol $ml={1}><SmallTool $gap={4}><GraphicsIc />Add Graphics Layer</SmallTool></ToolCol>
          </GroupBody>
          <GroupFoot><GroupName>Layer</GroupName></GroupFoot>
        </RibbonGroup>
        <RibbonGroup $w={262}>
          <GroupBody $pl={5}>
            <LargeTool $w={46}><IconBox><SelectIc /></IconBox>Select<ToolChevron><Chev /></ToolChevron></LargeTool>
            <LargeTool $w={56}><IconBox><SelectAttr /></IconBox>Select By<span>Attributes</span></LargeTool>
            <LargeTool $w={56} $ml={4}><IconBox><SelectLoc /></IconBox>Select By<span>Location</span></LargeTool>
            <ToolCol $ml={3}>
              <SmallTool><Slot $w={18}><AttrIc /></Slot>Attributes</SmallTool>
              <SmallTool><Slot $w={18}><ClearIc /></Slot>Clear</SmallTool>
              <SmallTool><Slot $w={18}><ZoomToIc /></Slot>Zoom To</SmallTool>
            </ToolCol>
          </GroupBody>
          <GroupFoot><GroupName>Selection</GroupName><Launcher><Launch /></Launcher></GroupFoot>
        </RibbonGroup>
        <RibbonGroup $w={263}>
          <GroupBody $pl={9}>
            <LargeTool $w={50}><IconBox><Measure /></IconBox>Measure<ToolChevron><Chev /></ToolChevron></LargeTool>
            <LargeTool $w={50}><IconBox><Binoc /></IconBox>Locate<ToolChevron><Chev /></ToolChevron></LargeTool>
            <LargeTool $w={72} $muted><IconBox><Infographic /></IconBox>Infographics<ToolChevron><Chev c="#aaa" /></ToolChevron></LargeTool>
            <LargeTool $w={76}><IconBox><Coord /></IconBox>Coordinate<span>Conversion</span></LargeTool>
          </GroupBody>
          <GroupFoot><GroupName>Inquiry</GroupName></GroupFoot>
        </RibbonGroup>
        <RibbonGroup $w={185}>
          <GroupBody $pl={10}>
            <ToolCol $w={115}>
              <SmallTool $gap={4}><Tag mark="pause" />Pause<Slot $w={1} /><Tag mark="lock" />Lock</SmallTool>
              <SmallTool $gap={4}><Tag mark="x" />View Unplaced</SmallTool>
              <SmallTool $gap={6}><Tag />More <Chev /></SmallTool>
            </ToolCol>
            <LargeTool $w={50}><IconBox><Convert /></IconBox>Convert<ToolChevron><Chev /></ToolChevron></LargeTool>
          </GroupBody>
          <GroupFoot><GroupName>Labeling</GroupName><Launcher><Launch /></Launcher></GroupFoot>
        </RibbonGroup>
        <RibbonGroup $w={103}>
          <GroupBody $pl={5}>
            <LargeTool $w={70} $muted><IconBox><DownloadMap /></IconBox>Download<LabelLine>Map <Chev c="#aaa" /></LabelLine></LargeTool>
            <ToolCol>
              <SmallTool><OfflineSm /></SmallTool>
              <SmallTool><OfflineSm x /></SmallTool>
            </ToolCol>
          </GroupBody>
          <GroupFoot><GroupName>Offline</GroupName><Launcher><Launch /></Launcher></GroupFoot>
        </RibbonGroup>
        <Collapse><Ic w={12} h={8}><path d="M1 6.5L6 1.5L11 6.5" stroke="#444" strokeWidth="1.4" /></Ic></Collapse>
      </Ribbon>
      <ShareBanner>
        <PauseMark><span /><span /></PauseMark>
        <ShareText>screenapp.io is sharing your screen.</ShareText>
        <StopButton>Stop sharing</StopButton>
        <HideLink>Hide</HideLink>
      </ShareBanner>
      <Main>
        <Panel $w={292}>
          <PaneHeader>
            <PaneTitle>Contents</PaneTitle>
            <Slot $w={18}><Chev s={10} /></Slot>
            <Slot $w={22}><Pin /></Slot>
            <Slot $w={18}><Cross /></Slot>
          </PaneHeader>
          <SearchRow>
            <Slot $w={18}><FilterIc /></Slot>
            <SearchField>Search<Grow /><Slot $w={24}><Lens s={14} /></Slot><Slot $w={22}><Chev /></Slot></SearchField>
          </SearchRow>
          <ViewIcons>
            <Slot $w={33}><TreeIc /></Slot>
            <Slot $w={34}><DbIc /></Slot>
            <Slot $w={35}><SheetIc /></Slot>
            <Slot $w={34}><Pencil /></Slot>
            <Slot $w={34}><GridPlus /></Slot>
            <Slot $w={35}><BigTag /></Slot>
            <Slot $w={34}><Satellite /></Slot>
          </ViewIcons>
          <ViewRule />
          <OrderHeading>Drawing Order</OrderHeading>
          <TreeRow $indent={1}><Slot $w={8}><TreeTri /></Slot><Slot $w={17}><MiniMap /></Slot><TreeText $ml={1}>Map</TreeText></TreeRow>
          <TreeRow $indent={12}><Slot $w={8}><TreeTri /></Slot><CheckBox /><TreeText $ml={2}>shape_2</TreeText></TreeRow>
          <SwatchRow><Swatch $ml={29} /></SwatchRow>
          <TreeRow $indent={12}><Slot $w={8}><TreeTri /></Slot><SelectionBox><CheckBox><Tick /></CheckBox>shape_1</SelectionBox></TreeRow>
          <SwatchRow><Swatch $ml={29} /></SwatchRow>
        </Panel>
        <Center>
          <DocTabs>
            <MapTab><MiniMap />Map<Slot $w={22}><Cross c="#666" /></Slot></MapTab>
            <RightChevron><Chev c="#888" s={10} /></RightChevron>
          </DocTabs>
          <MapView><Polygons /></MapView>
          <MapStatus>
            <ScaleBox>1:3,918<DownTri /></ScaleBox>
            <VSep $ml={5} $mr={5} />
            <Slot $w={24}><GridAdd /></Slot>
            <Slot $w={24}><GridPlain /></Slot>
            <Slot $w={24}><SnapIc /></Slot>
            <Slot $w={24}><CrossSm /></Slot>
            <Slot $w={24}><NArrow /></Slot>
            <VSep $ml={2} $mr={36} />
            <CoordText>31.0051360°E 30.5569760°N</CoordText>
            <Slot $w={28}><Chev s={12} /></Slot>
            <VSep $ml={26} $mr={7} />
            <Slot $w={20}><ZoomToIc /></Slot>
            <Slot $w={116} $ml={3} $left>Selected Features: 3</Slot>
            <VSep $ml={1} />
            <Slot $w={27}><PauseBars /></Slot>
            <VSep $ml={3} />
            <Slot $w={28}><Refresh /></Slot>
          </MapStatus>
          <TableTabs>
            <TableTab><TableMini />shape_1<Slot $w={14} $ml={-3}><Cross c="#fff" /></Slot></TableTab>
            <RightChevron><Chev c="#888" s={10} /></RightChevron>
          </TableTabs>
          <TableBar>
            <BarLabel $w={34}>Field:</BarLabel>
            <Slot $w={28}><FieldAdd /></Slot>
            <Slot $w={28}><FieldAdd minus /></Slot>
            <VSep $ml={6} $mr={6} $h={24} />
            <BarLabel $w={63}>Selection:</BarLabel>
            <Slot $w={28}><SelA /></Slot>
            <Slot $w={27}><SelB /></Slot>
            <Slot $w={28}><SelC /></Slot>
            <Slot $w={27}><SelD /></Slot>
            <Slot $w={28}><SelE /></Slot>
            <Slot $w={28}><SelF /></Slot>
            <Grow />
            <Slot $w={24}><Hamburger /></Slot>
            <Slot $w={5} />
          </TableBar>
          <TableArea>
            <GridSide>
              <GridWhite>
                <Row $h={26}>
                  <RowHead><Ic w={15} h={15}><path d="M14 2v12H2z" fill="#ddd" /></Ic></RowHead>
                  <Cell $head $mark $bg="#cfe3f5" $weight={600}>OBJECTID *</Cell>
                  <Cell $head $bg="#ebebeb" $weight={600}>SHAPE *</Cell>
                  <Cell $head $bg="#ebebeb" $weight={600}>Shape_Length</Cell>
                  <Cell $head $bg="#ebebeb" $weight={600}>Shape_Area</Cell>
                  <Cell $head $bg="#ebebeb" $weight={600}>problem<Grow /><Ic w={7} h={5}><path d="M3.5 0L7 5H0z" fill="#555" /></Ic></Cell>
                </Row>
                {rows.map((r, i) => {
                  const bg = i === 0 ? "#fff" : i === 1 ? "#e9e9e9" : "#7ff5fd";
                  return (
                    <Row key={r[0]} $h={i === 0 ? 25 : 27}>
                      <RowHead $active={i === 4}>{r[0]}</RowHead>
                      <Cell $bg={i === 4 ? "#c6dff5" : bg}>{r[1]}</Cell>
                      <Cell $bg={bg}>{r[2]}</Cell>
                      <Cell $bg={bg} $right>{r[3]}</Cell>
                      <Cell $bg={bg} $right>{r[4]}</Cell>
                      <Cell $bg={bg}>{r[5]}</Cell>
                    </Row>
                  );
                })}
                <AddRow><AddHead /><AddText>Click to add new row.</AddText></AddRow>
              </GridWhite>
              <HScroll><span>‹</span><span>›</span></HScroll>
            </GridSide>
            <VScroll>
              <ScrollEnd><Ic w={8} h={6}><path d="M1 5l3-3 3 3" stroke="#999" /></Ic></ScrollEnd>
              <ScrollThumb />
              <Grow />
              <ScrollEnd><Chev c="#999" /></ScrollEnd>
            </VScroll>
          </TableArea>
          <TableStatus>
            <LayoutActive><ListLines /></LayoutActive>
            <Slot $w={40}><ListLines s={14} /></Slot>
            <Slot $w={24}><Skip c="#555" /></Slot>
            <Slot $w={24}><Skip c="#999" flip /></Slot>
            <Slot $w={176} $ml={7} $left>3 of 7 selected</Slot>
            <Slot $w={42} $left>Filters:</Slot>
            <FilterChips><Chip t="M8 4v5h3" /><Chip t="M6 12V6M8 12V4M10 12V6" /></FilterChips>
            <Slot $w={24} $ml={1}><FilterTable /></Slot>
            <Slot $w={24}><UpDown /></Slot>
            <Slot $w={24}><Ic w={8} h={2}><path d="M0 1h8" stroke="#555" strokeWidth="1.6" /></Ic></Slot>
            <SliderTrack>
              <SliderFill style={{ width: 52 }} />
              <SliderThumb />
              <SliderRest />
            </SliderTrack>
            <Slot $w={22}><Ic w={10} h={10}><path d="M0 5h10M5 0v10" stroke="#555" strokeWidth="1.6" /></Ic></Slot>
            <ZoomBox>100%<DownTri /></ZoomBox>
            <VSep $ml={13} $h={22} />
            <Slot $w={30}><Refresh s={19} /></Slot>
          </TableStatus>
        </Center>
        <RightColumn>
          <Panel $w={412} $grow>
            <PaneHeader $pl={6}>
              <PaneTitle>Geoprocessing</PaneTitle>
              <Slot $w={18}><Chev s={10} /></Slot>
              <Slot $w={22}><Pin /></Slot>
              <Slot $w={18}><Cross /></Slot>
            </PaneHeader>
            <ToolHeader><ArrowBack /><ToolLabel>rafat clip tool</ToolLabel><PlusCircle /></ToolHeader>
            <GpTabs>
              <GpTab $active>Parameters</GpTab><GpTab>Environments</GpTab><Grow /><Slot $w={18}><HelpCircle /></Slot><Slot $w={2} />
            </GpTabs>
            <FieldLabel>enter feature class</FieldLabel>
            <FieldRow><FieldInput>shape_1</FieldInput><Slot $w={32}><Folder /></Slot></FieldRow>
            <Grow />
            <RunRow>
              <RunButton><PlayRound />Run<Grow /><Chev /></RunButton>
            </RunRow>
            <Toast>
              <OkBadge />
              <ToastText>
                <div>rafat clip tool completed.</div>
                <ToastLinks><span>View Details</span><span>Open History</span></ToastLinks>
              </ToastText>
              <Cross c="#777" />
            </Toast>
          </Panel>
          <BottomTabs>
            <BottomTab $w={50} $ml={3}>Catalog</BottomTab>
            <BottomTab $w={92} $ml={5} $active>Geoprocessing</BottomTab>
          </BottomTabs>
        </RightColumn>
        <Rail>
          <RailLabel>Create Features</RailLabel>
          <RailThumb />
        </Rail>
      </Main>
      <DarkEdge />
    </Win>
  );
}
